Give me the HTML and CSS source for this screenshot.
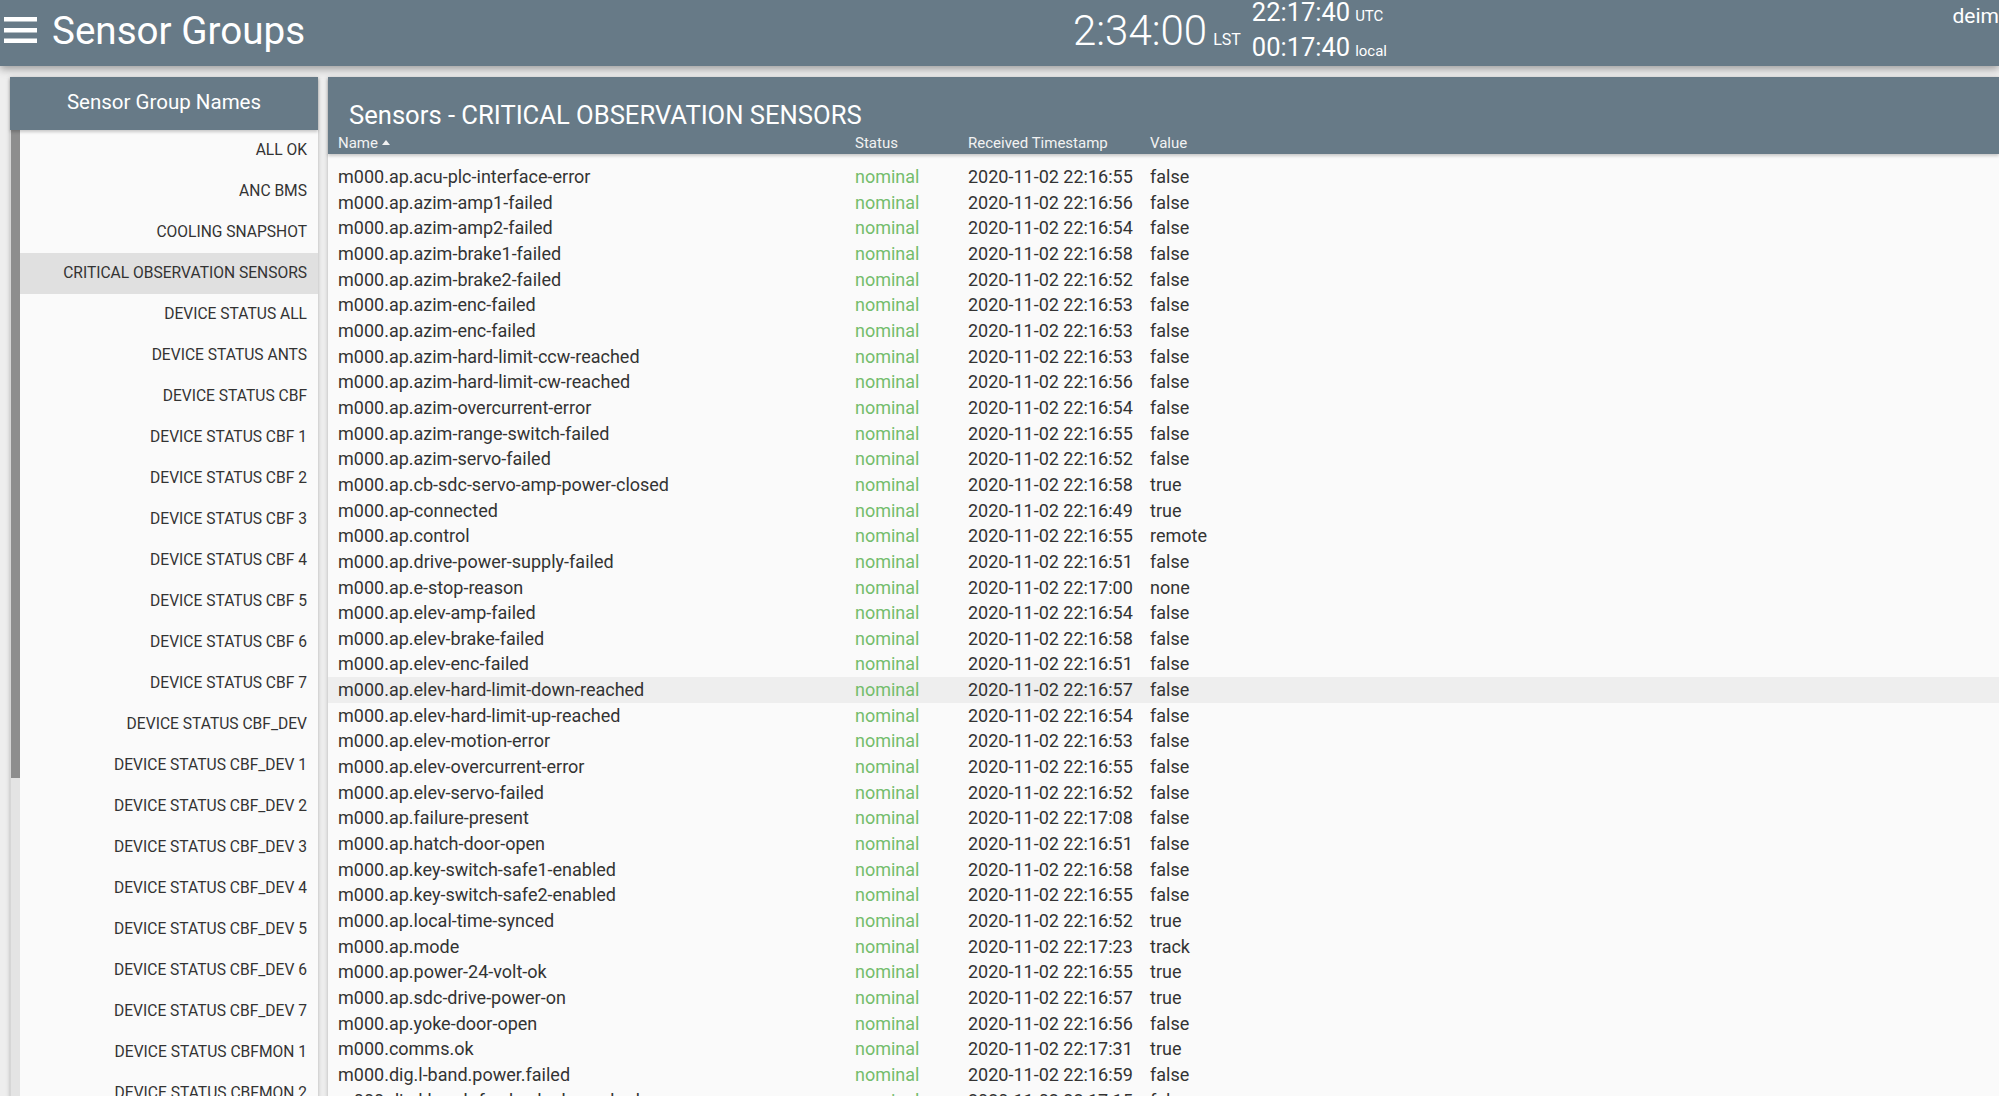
FILE: index.html
```html
<!DOCTYPE html>
<html>
<head>
<meta charset="utf-8">
<link rel="stylesheet" href="styles.css">
</head>
<body>
<header class="topbar">
  <div class="brand">
    <svg class="menu-icon" width="33" height="27" viewBox="0 0 33 27"><rect x="0" y="0" width="33" height="4.5" fill="#fff"/><rect x="0" y="11" width="33" height="4.5" fill="#fff"/><rect x="0" y="21.5" width="33" height="4.5" fill="#fff"/></svg>
    <span class="app-title">Sensor Groups</span>
  </div>
  <div class="clock">
    <div class="lst">2:34:00<span class="lst-label">LST<span class="caret"></span></span></div>
    <div class="times">
      <div class="time-line">22:17:40<span class="time-label">UTC</span></div>
      <div class="time-line">00:17:40<span class="time-label">local</span></div>
    </div>
  </div>
  <div class="user">deim</div>
</header>
<main class="content">
  <aside class="sidebar">
    <div class="sidebar-head">Sensor Group Names</div>
    <div class="sidebar-body">
      <div class="scrollbar"><div class="thumb"></div></div>
      <ul class="group-list">
        <li>ALL OK</li>
        <li>ANC BMS</li>
        <li>COOLING SNAPSHOT</li>
        <li class="selected">CRITICAL OBSERVATION SENSORS</li>
        <li>DEVICE STATUS ALL</li>
        <li>DEVICE STATUS ANTS</li>
        <li>DEVICE STATUS CBF</li>
        <li>DEVICE STATUS CBF 1</li>
        <li>DEVICE STATUS CBF 2</li>
        <li>DEVICE STATUS CBF 3</li>
        <li>DEVICE STATUS CBF 4</li>
        <li>DEVICE STATUS CBF 5</li>
        <li>DEVICE STATUS CBF 6</li>
        <li>DEVICE STATUS CBF 7</li>
        <li>DEVICE STATUS CBF_DEV</li>
        <li>DEVICE STATUS CBF_DEV 1</li>
        <li>DEVICE STATUS CBF_DEV 2</li>
        <li>DEVICE STATUS CBF_DEV 3</li>
        <li>DEVICE STATUS CBF_DEV 4</li>
        <li>DEVICE STATUS CBF_DEV 5</li>
        <li>DEVICE STATUS CBF_DEV 6</li>
        <li>DEVICE STATUS CBF_DEV 7</li>
        <li>DEVICE STATUS CBFMON 1</li>
        <li>DEVICE STATUS CBFMON 2</li>
      </ul>
    </div>
  </aside>
  <section class="panel">
    <div class="panel-head">
      <div class="panel-title">Sensors - CRITICAL OBSERVATION SENSORS</div>
      <div class="row col-head">
        <span>Name<svg class="sort" width="8" height="5" viewBox="0 0 8 5"><polygon points="0,5 4,0 8,5" fill="#f2f2f2"/></svg></span>
        <span>Status</span>
        <span>Received Timestamp</span>
        <span>Value</span>
      </div>
    </div>
    <div class="rows">
      <div class="row"><span>m000.ap.acu-plc-interface-error</span><span class="ok">nominal</span><span>2020-11-02 22:16:55</span><span>false</span></div>
      <div class="row"><span>m000.ap.azim-amp1-failed</span><span class="ok">nominal</span><span>2020-11-02 22:16:56</span><span>false</span></div>
      <div class="row"><span>m000.ap.azim-amp2-failed</span><span class="ok">nominal</span><span>2020-11-02 22:16:54</span><span>false</span></div>
      <div class="row"><span>m000.ap.azim-brake1-failed</span><span class="ok">nominal</span><span>2020-11-02 22:16:58</span><span>false</span></div>
      <div class="row"><span>m000.ap.azim-brake2-failed</span><span class="ok">nominal</span><span>2020-11-02 22:16:52</span><span>false</span></div>
      <div class="row"><span>m000.ap.azim-enc-failed</span><span class="ok">nominal</span><span>2020-11-02 22:16:53</span><span>false</span></div>
      <div class="row"><span>m000.ap.azim-enc-failed</span><span class="ok">nominal</span><span>2020-11-02 22:16:53</span><span>false</span></div>
      <div class="row"><span>m000.ap.azim-hard-limit-ccw-reached</span><span class="ok">nominal</span><span>2020-11-02 22:16:53</span><span>false</span></div>
      <div class="row"><span>m000.ap.azim-hard-limit-cw-reached</span><span class="ok">nominal</span><span>2020-11-02 22:16:56</span><span>false</span></div>
      <div class="row"><span>m000.ap.azim-overcurrent-error</span><span class="ok">nominal</span><span>2020-11-02 22:16:54</span><span>false</span></div>
      <div class="row"><span>m000.ap.azim-range-switch-failed</span><span class="ok">nominal</span><span>2020-11-02 22:16:55</span><span>false</span></div>
      <div class="row"><span>m000.ap.azim-servo-failed</span><span class="ok">nominal</span><span>2020-11-02 22:16:52</span><span>false</span></div>
      <div class="row"><span>m000.ap.cb-sdc-servo-amp-power-closed</span><span class="ok">nominal</span><span>2020-11-02 22:16:58</span><span>true</span></div>
      <div class="row"><span>m000.ap-connected</span><span class="ok">nominal</span><span>2020-11-02 22:16:49</span><span>true</span></div>
      <div class="row"><span>m000.ap.control</span><span class="ok">nominal</span><span>2020-11-02 22:16:55</span><span>remote</span></div>
      <div class="row"><span>m000.ap.drive-power-supply-failed</span><span class="ok">nominal</span><span>2020-11-02 22:16:51</span><span>false</span></div>
      <div class="row"><span>m000.ap.e-stop-reason</span><span class="ok">nominal</span><span>2020-11-02 22:17:00</span><span>none</span></div>
      <div class="row"><span>m000.ap.elev-amp-failed</span><span class="ok">nominal</span><span>2020-11-02 22:16:54</span><span>false</span></div>
      <div class="row"><span>m000.ap.elev-brake-failed</span><span class="ok">nominal</span><span>2020-11-02 22:16:58</span><span>false</span></div>
      <div class="row"><span>m000.ap.elev-enc-failed</span><span class="ok">nominal</span><span>2020-11-02 22:16:51</span><span>false</span></div>
      <div class="row hover"><span>m000.ap.elev-hard-limit-down-reached</span><span class="ok">nominal</span><span>2020-11-02 22:16:57</span><span>false</span></div>
      <div class="row"><span>m000.ap.elev-hard-limit-up-reached</span><span class="ok">nominal</span><span>2020-11-02 22:16:54</span><span>false</span></div>
      <div class="row"><span>m000.ap.elev-motion-error</span><span class="ok">nominal</span><span>2020-11-02 22:16:53</span><span>false</span></div>
      <div class="row"><span>m000.ap.elev-overcurrent-error</span><span class="ok">nominal</span><span>2020-11-02 22:16:55</span><span>false</span></div>
      <div class="row"><span>m000.ap.elev-servo-failed</span><span class="ok">nominal</span><span>2020-11-02 22:16:52</span><span>false</span></div>
      <div class="row"><span>m000.ap.failure-present</span><span class="ok">nominal</span><span>2020-11-02 22:17:08</span><span>false</span></div>
      <div class="row"><span>m000.ap.hatch-door-open</span><span class="ok">nominal</span><span>2020-11-02 22:16:51</span><span>false</span></div>
      <div class="row"><span>m000.ap.key-switch-safe1-enabled</span><span class="ok">nominal</span><span>2020-11-02 22:16:58</span><span>false</span></div>
      <div class="row"><span>m000.ap.key-switch-safe2-enabled</span><span class="ok">nominal</span><span>2020-11-02 22:16:55</span><span>false</span></div>
      <div class="row"><span>m000.ap.local-time-synced</span><span class="ok">nominal</span><span>2020-11-02 22:16:52</span><span>true</span></div>
      <div class="row"><span>m000.ap.mode</span><span class="ok">nominal</span><span>2020-11-02 22:17:23</span><span>track</span></div>
      <div class="row"><span>m000.ap.power-24-volt-ok</span><span class="ok">nominal</span><span>2020-11-02 22:16:55</span><span>true</span></div>
      <div class="row"><span>m000.ap.sdc-drive-power-on</span><span class="ok">nominal</span><span>2020-11-02 22:16:57</span><span>true</span></div>
      <div class="row"><span>m000.ap.yoke-door-open</span><span class="ok">nominal</span><span>2020-11-02 22:16:56</span><span>false</span></div>
      <div class="row"><span>m000.comms.ok</span><span class="ok">nominal</span><span>2020-11-02 22:17:31</span><span>true</span></div>
      <div class="row"><span>m000.dig.l-band.power.failed</span><span class="ok">nominal</span><span>2020-11-02 22:16:59</span><span>false</span></div>
      <div class="row"><span>m000.dig.l-band.rfcu-hw-lock-reached</span><span class="ok">nominal</span><span>2020-11-02 22:17:15</span><span>false</span></div>
    </div>
  </section>
</main>
</body>
</html>
```

FILE: styles.css
```css
html, body {
  margin: 0;
  padding: 0;
  height: 100%;
  overflow: hidden;
}
body {
  background: #eeeeee;
  font-family: Roboto, "Liberation Sans", sans-serif;
  color: #333333;
}
.topbar {
  position: relative;
  z-index: 2;
  height: 66px;
  background: #677a87;
  color: #ffffff;
  display: flex;
  align-items: flex-start;
  overflow: hidden;
  box-shadow: 0 3px 8px rgba(0, 0, 0, 0.35);
}
.brand {
  flex: 0 0 1073px;
  display: flex;
  align-items: flex-start;
}
.menu-icon {
  display: block;
  margin: 17px 0 0 4px;
}
.app-title {
  margin: 9px 0 0 15px;
  font-size: 38.6px;
  line-height: 44px;
}
.clock {
  display: flex;
  align-items: flex-start;
}
.lst {
  margin-top: 10px;
  font-size: 42px;
  line-height: 42px;
  font-weight: 300;
}
.lst-label {
  position: relative;
  margin-left: 6px;
  font-size: 16px;
  line-height: 16px;
  font-weight: 400;
}
.caret {
  position: absolute;
  left: 5px;
  top: -44px;
  width: 0;
  height: 0;
  border-left: 4px solid transparent;
  border-right: 4px solid transparent;
  border-bottom: 5px solid #ffffff;
}
.times {
  margin: -5px 0 0 11px;
}
.time-line {
  font-size: 25.5px;
  line-height: 35px;
}
.time-label {
  margin-left: 5px;
  font-size: 15px;
  line-height: 14px;
}
.user {
  margin-left: auto;
  padding: 2px 0 0 0;
  font-size: 21px;
  line-height: 28px;
}
.content {
  display: flex;
  align-items: flex-start;
  gap: 10px;
  padding: 11px 0 0 10px;
  height: calc(100% - 77px);
}
.sidebar {
  flex: 0 0 308px;
  height: 1100px;
  background: #fafafa;
  box-shadow: 0 1px 4px rgba(0, 0, 0, 0.25);
  display: flex;
  flex-direction: column;
}
.sidebar-head {
  height: 53px;
  line-height: 50px;
  text-align: center;
  background: #677a87;
  color: #ffffff;
  font-size: 20.5px;
  box-shadow: 0 2px 3px rgba(0, 0, 0, 0.2);
  position: relative;
}
.sidebar-body {
  flex: 1;
  display: flex;
  align-items: stretch;
}
.scrollbar {
  flex: 0 0 10px;
  background: #e4e4e4;
  border-left: 1px solid #d6d6d6;
  box-sizing: border-box;
}
.thumb {
  height: 648px;
  background: #8e8e8e;
}
.group-list {
  flex: 1;
  list-style: none;
  margin: 0;
  padding: 0;
}
.group-list li {
  height: 41px;
  line-height: 41px;
  text-align: right;
  padding-right: 11px;
  font-size: 15.6px;
  color: #333333;
}
.group-list li.selected {
  background: #e0e0e0;
}
.panel {
  flex: 1;
  height: 1100px;
  background: #fafafa;
  box-shadow: 0 1px 4px rgba(0, 0, 0, 0.25);
}
.panel-head {
  background: #677a87;
  color: #ffffff;
  padding-top: 24px;
  height: 53px;
  box-shadow: 0 2px 3px rgba(0, 0, 0, 0.2);
  position: relative;
}
.panel-title {
  margin-left: 21px;
  font-size: 25.6px;
  line-height: 28px;
}
.row {
  display: grid;
  grid-template-columns: 517px 113px 182px 1fr;
  padding-left: 10px;
  white-space: nowrap;
}
.col-head {
  margin-top: 4px;
  font-size: 15px;
  line-height: 20px;
  color: #f2f2f2;
}
.sort {
  margin-left: 4px;
  vertical-align: 3px;
}
.rows {
  padding-top: 10px;
}
.rows .row {
  font-size: 18px;
  line-height: 25.66px;
  height: 25.66px;
  color: #333333;
}
.rows .row.hover {
  background: #eeeeee;
}
.ok {
  color: #74bd6c;
}
```
